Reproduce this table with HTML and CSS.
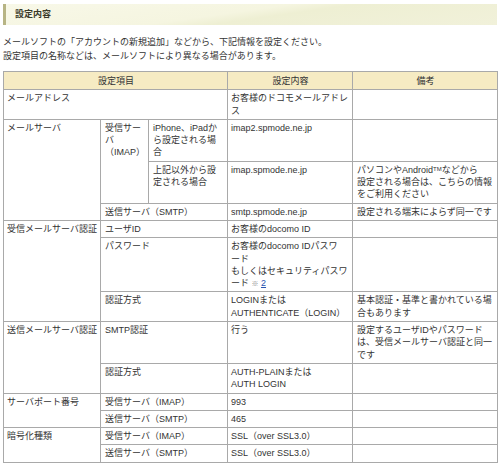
FILE: index.html
```html
<!DOCTYPE html>
<html lang="ja">
<head>
<meta charset="utf-8">
<title>設定内容</title>
<link rel="stylesheet" href="styles.css">
</head>
<body>
<div class="page">
  <h2 class="section-title">設定内容</h2>
  <p class="intro">メールソフトの「アカウントの新規追加」などから、下記情報を設定ください。<br>設定項目の名称などは、メールソフトにより異なる場合があります。</p>
  <table class="settings">
    <colgroup>
      <col class="c1"><col class="c2"><col class="c3"><col class="c4"><col class="c5">
    </colgroup>
    <thead>
      <tr><th colspan="3">設定項目</th><th>設定内容</th><th>備考</th></tr>
    </thead>
    <tbody>
      <tr><td colspan="3" class="group">メールアドレス</td><td class="value">お客様のドコモメールアドレ<br>ス</td><td></td></tr>
      <tr><td rowspan="3" class="group">メールサーバ</td><td rowspan="2">受信サー<br>バ<br>（IMAP）</td><td class="case">iPhone、iPadか<br>ら設定される場<br>合</td><td class="value">imap2.spmode.ne.jp</td><td></td></tr>
      <tr><td class="case">上記以外から設<br>定される場合</td><td class="value">imap.spmode.ne.jp</td><td>パソコンやAndroid<span class="tm">TM</span>などから<br>設定される場合は、こちらの情報<br>をご利用ください</td></tr>
      <tr><td colspan="2">送信サーバ（SMTP）</td><td class="value">smtp.spmode.ne.jp</td><td>設定される端末によらず同一です</td></tr>
      <tr><td rowspan="3" class="group">受信メールサーバ認証</td><td colspan="2">ユーザID</td><td class="value">お客様のdocomo ID</td><td></td></tr>
      <tr><td colspan="2">パスワード</td><td class="value">お客様のdocomo IDパスワ<br>ード<br>もしくはセキュリティパスワ<br>ード <span class="note">※</span> <a class="ref" href="#n2">2</a></td><td></td></tr>
      <tr><td colspan="2">認証方式</td><td class="value">LOGINまたは<br>AUTHENTICATE（LOGIN）</td><td>基本認証・基準と書かれている場<br>合もあります</td></tr>
      <tr><td rowspan="2" class="group">送信メールサーバ認証</td><td colspan="2">SMTP認証</td><td class="value">行う</td><td>設定するユーザIDやパスワード<br>は、受信メールサーバ認証と同一<br>です</td></tr>
      <tr><td colspan="2">認証方式</td><td class="value">AUTH-PLAINまたは<br>AUTH LOGIN</td><td></td></tr>
      <tr><td rowspan="2" class="group">サーバポート番号</td><td colspan="2">受信サーバ（IMAP）</td><td class="value">993</td><td></td></tr>
      <tr><td colspan="2">送信サーバ（SMTP）</td><td class="value">465</td><td></td></tr>
      <tr><td rowspan="2" class="group">暗号化種類</td><td colspan="2">受信サーバ（IMAP）</td><td class="value">SSL（over SSL3.0）</td><td></td></tr>
      <tr><td colspan="2">送信サーバ（SMTP）</td><td class="value">SSL（over SSL3.0）</td><td></td></tr>
    </tbody>
  </table>
</div>
</body>
</html>
```
FILE: styles.css
```css
html, body {
  margin: 0;
  padding: 0;
  background: #ffffff;
}
body {
  font-family: "Liberation Sans", "Noto Sans CJK JP", sans-serif;
  font-size: 9px;
  color: #333333;
}
.page {
  padding: 4px 3px 0 3px;
}
.section-title {
  margin: 0;
  height: 21px;
  line-height: 21px;
  font-size: 9px;
  font-weight: bold;
  color: #3a3a2a;
  padding-left: 9px;
  border-left: 3px solid #b7b484;
  background: linear-gradient(172deg, #f8f8e8 0%, #f5f5e0 45%, #eeefd3 55%, #f1f1da 100%);
}
.intro {
  margin: 10px 0 8px 0;
  line-height: 14px;
}
.settings {
  width: 494px;
  border-collapse: collapse;
  table-layout: fixed;
  line-height: 12.3px;
}
.c1 { width: 97px; }
.c2 { width: 48px; }
.c3 { width: 79px; }
.c4 { width: 125px; }
.c5 { width: 145px; }
.settings th,
.settings td {
  border: 1px solid #a9a9a9;
  padding: 2px 3px 2px 4px;
  vertical-align: top;
  text-align: left;
  white-space: nowrap;
}
.settings td.group {
  padding-left: 3px;
  padding-right: 1px;
}
.settings td.value {
  padding-left: 3px;
}
.settings th {
  background: #f6ebc3;
  font-weight: normal;
  text-align: center;
  padding-top: 3px;
  padding-bottom: 2px;
}
.tm {
  font-size: 6px;
  line-height: 1;
  vertical-align: 2px;
}
.note {
  color: #888888;
  font-size: 7px;
  line-height: 1;
}
.ref {
  color: #2a55b0;
  text-decoration: underline;
}
```
